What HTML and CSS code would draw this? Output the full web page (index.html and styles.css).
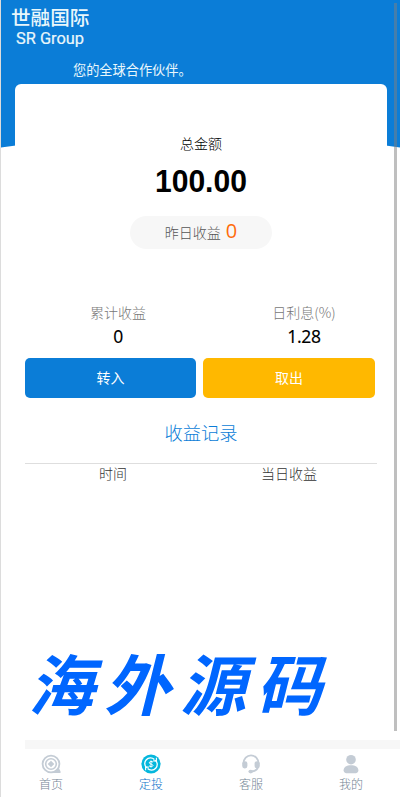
FILE: index.html
```html
<!DOCTYPE html>
<html lang="zh-CN">
<head>
<meta charset="utf-8">
<title>定投</title>
<link rel="stylesheet" href="styles.css">
</head>
<body>
<div class="page">
  <svg class="hero" viewBox="0 0 399 149" preserveAspectRatio="none"><path fill="#0b7dd7" d="M0 0H399V147.5Q200 117 0 147.5Z"/></svg>
  <header class="brand">
    <h1>世融国际</h1>
    <div class="brand-en">SR Group</div>
    <div class="slogan">您的全球合作伙伴。</div>
  </header>
  <section class="card">
    <div class="total-label">总金额</div>
    <div class="total">100.00</div>
    <div class="yesterday"><span>昨日收益</span><b>0</b></div>
  </section>
  <section class="stats">
    <div><div class="stat-label">累计收益</div><div class="stat-value">0</div></div>
    <div><div class="stat-label">日利息(%)</div><div class="stat-value">1.28</div></div>
  </section>
  <div class="actions">
    <button class="btn in">转入</button>
    <button class="btn out">取出</button>
  </div>
  <h2>收益记录</h2>
  <div class="records"><div>时间</div><div>当日收益</div></div>
  <div class="watermark"><span>海</span><span>外</span><span>源</span><span>码</span></div>
  <div class="strip"></div>
  <nav class="tabs">
    <a>
      <svg viewBox="0 0 20 20"><g fill="none" stroke="#c4ccd5"><circle cx="10" cy="10" r="8.4" stroke-width="1.8"/><circle cx="10" cy="10" r="5.3" stroke-width="1.6"/></g><path fill="#c4ccd5" d="M10 6.7 13.3 10 10 13.3 6.7 10ZM14 17l3.5-3.5 2 3.8V19H10Z"/></svg>
      <span>首页</span>
    </a>
    <a class="active">
      <svg viewBox="0 0 20 20"><circle cx="10" cy="10" r="9.6" fill="#04b7dd"/><g fill="none" stroke="#fff" stroke-width="1.3"><path d="M5.6 13.8A5.7 5.7 0 0 1 13.4 5.4M14.4 6.2A5.7 5.7 0 0 1 6.6 14.6"/><path d="M15.4 3.8v3.1h-3.2M4.6 16.2v-3.1h3.2" stroke-width="1.1"/><path d="M12 8.2C11 7 8.3 7.3 8.3 8.8S12 10 12 11.4 9 13 8 11.8M10 6.5v7" stroke-width="1"/></g></svg>
      <span>定投</span>
    </a>
    <a>
      <svg viewBox="0 0 20 20"><path fill="none" stroke="#c4ccd5" stroke-width="1.8" d="M2.5 9.5a7.5 8.2 0 0 1 15 0M17 13q-1 4-6.5 4.5"/><rect x="1.2" y="7.2" width="5.2" height="7.2" rx="2.4" fill="#c4ccd5"/><rect x="13.6" y="7.2" width="5.2" height="7.2" rx="2.4" fill="#c4ccd5"/><ellipse cx="9.7" cy="17.6" rx="2.3" ry="1.8" fill="#c4ccd5"/></svg>
      <span>客服</span>
    </a>
    <a>
      <svg viewBox="0 0 20 20"><g fill="#c4ccd5"><circle cx="10" cy="5.7" r="4.8"/><path d="M2.6 16.4c0-3.4 3.1-5.2 7.4-5.2s7.4 1.8 7.4 5.2c0 2-2 2.8-4 2.8H6.6c-2 0-4-.8-4-2.8Z"/></g></svg>
      <span>我的</span>
    </a>
  </nav>
  <div class="scrollbar"></div>
</div>
</body>
</html>
```
FILE: styles.css
```css
* { box-sizing: border-box; }
body {
  margin: 0;
  background: #fff;
  font-family: "Noto Sans CJK SC", sans-serif;
  font-size: 14px;
  font-weight: 300;
  color: #000;
}
.page {
  position: relative;
  display: flex;
  flex-direction: column;
  height: 797px;
  overflow: hidden;
  border-left: 1px solid #dcdcdc;
}
.hero {
  position: absolute;
  top: 0;
  left: 0;
  width: 399px;
  height: 149px;
}
.brand {
  position: relative;
  height: 84px;
  padding-top: 5px;
  color: #e9f7fb;
}
.brand h1 {
  margin: 0 0 0 10px;
  font-size: 19.6px;
  font-weight: 500;
  line-height: 24px;
}
.brand-en {
  margin-left: 15px;
  font: 400 16.4px/19px Roboto, sans-serif;
  -webkit-text-stroke: .2px #e9f7fb;
}
.slogan {
  margin: 12px 0 0 72px;
  font-size: 13.2px;
  font-weight: 400;
  line-height: 20px;
}
.card {
  position: relative;
  display: flex;
  flex-direction: column;
  align-items: center;
  width: 372px;
  height: 219px;
  margin-left: 14px;
  padding-top: 49px;
  background: #fff;
  border-radius: 6px;
}
.total-label { line-height: 20px; }
.total {
  margin-top: 9px;
  font: bold 32px/38px "Liberation Sans", sans-serif;
  transform: scaleX(.94);
}
.yesterday {
  display: flex;
  justify-content: center;
  gap: 5px;
  width: 142px;
  height: 33px;
  margin-top: 16px;
  border-radius: 17px;
  background: #f7f7f7;
  color: #555;
  line-height: 32px;
}
.yesterday b {
  font: 400 20px/30px "Open Sans", sans-serif;
  color: #ff6b0b;
}
.stats {
  display: grid;
  grid-template-columns: 186px 186px;
  width: 372px;
  height: 55px;
  margin-left: 24px;
  text-align: center;
}
.stat-label { line-height: 19px; color: #777; }
.stat-value {
  font: 400 17.5px/29px "Noto Sans", sans-serif;
  letter-spacing: -.3px;
  -webkit-text-stroke: .1px #000;
}
.actions {
  display: flex;
  gap: 7px;
  margin-left: 24px;
}
.btn {
  width: 171px;
  height: 40px;
  padding: 0 0 2px;
  border: 0;
  border-radius: 5px;
  font: 400 14px/38px "Noto Sans CJK SC", sans-serif;
  color: #fff;
}
.in { background: #0b7dd7; }
.out { width: 172px; background: #ffb800; }
h2 {
  margin: 21px 0 0;
  padding-left: 1px;
  font-size: 18.3px;
  font-weight: 300;
  line-height: 27px;
  text-align: center;
  color: #0b7dd7;
}
.records {
  display: grid;
  grid-template-columns: 1fr 1fr;
  width: 352px;
  height: 21px;
  margin: 17px 0 0 24px;
  border-top: 1px solid #dedede;
  text-align: center;
  line-height: 19px;
  color: #333;
}
.watermark {
  display: flex;
  gap: 10px;
  height: 76px;
  margin: 159px 0 0 27px;
  font: italic 700 66px/76px "Noto Sans CJK SC", sans-serif;
  color: #06f;
}
.strip {
  height: 9px;
  margin: 21px 0 0 24px;
  background: #f7f7f7;
}
.tabs {
  display: grid;
  grid-template-columns: repeat(4, 100px);
  padding-top: 5px;
}
.tabs a {
  display: flex;
  flex-direction: column;
  align-items: center;
  font-size: 12px;
  line-height: 20px;
  color: #748494;
}
.tabs svg { width: 20px; height: 20px; }
.tabs .active { color: #0b72c9; }
.scrollbar {
  position: absolute;
  top: 3px;
  right: 3px;
  width: 3px;
  height: 728px;
  background: rgba(128, 128, 128, .5);
}
```
